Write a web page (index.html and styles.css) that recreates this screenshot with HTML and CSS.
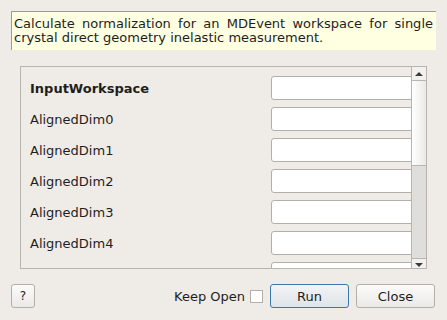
FILE: index.html
```html
<!DOCTYPE html>
<html lang="en">
<head>
  <meta charset="UTF-8" />
  <title>Algorithm Dialog</title>
  <link rel="stylesheet" href="styles.css">
</head>
<body>
  <div class="description">
    Calculate normalization for an MDEvent workspace for single crystal direct geometry inelastic measurement.
  </div>

  <div class="scroll-frame">
    <div class="properties">
      <div class="row">
        <label class="bold">InputWorkspace</label>
        <input type="text">
      </div>
      <div class="row">
        <label>AlignedDim0</label>
        <input type="text">
      </div>
      <div class="row">
        <label>AlignedDim1</label>
        <input type="text">
      </div>
      <div class="row">
        <label>AlignedDim2</label>
        <input type="text">
      </div>
      <div class="row">
        <label>AlignedDim3</label>
        <input type="text">
      </div>
      <div class="row">
        <label>AlignedDim4</label>
        <input type="text">
      </div>
      <div class="row">
        <label></label>
        <input type="text">
      </div>
    </div>
    <div class="scrollbar">
      <div class="arrow up"><span></span></div>
      <div class="handle"></div>
      <div class="track"></div>
      <div class="arrow down"><span></span></div>
    </div>
  </div>

  <div class="footer">
    <button class="btn help">?</button>
    <div class="spacer"></div>
    <span class="keep">Keep Open</span>
    <span class="checkbox"></span>
    <button class="btn run">Run</button>
    <button class="btn">Close</button>
  </div>
</body>
</html>
```

FILE: styles.css
```css
body {
  font-family: 'DejaVu Sans', sans-serif;
  font-size: 13px;
  color: #1e1e1e;
  margin: 0;
  padding: 11px 11px 0 11px;
  background-color: #efebe7;
  width: 425px;
  height: 309px;
  overflow: hidden;
}

.description {
  box-sizing: border-box;
  height: 39px;
  padding: 5px 3px 0 2px;
  background-color: #ffffe1;
  border-left: 1px solid #9c9a96;
  border-top: 1px solid #9c9a96;
  text-align: justify;
  line-height: 14px;
}

.scroll-frame {
  box-sizing: border-box;
  display: flex;
  margin: 16px 0 0 9px;
  width: 407px;
  height: 203px;
  border: 1px solid #b8b4af;
}

.properties {
  flex: 1;
  overflow: hidden;
  padding: 9px 0 0 9px;
  display: flex;
  flex-direction: column;
  gap: 7px;
}

.row {
  display: flex;
  align-items: center;
  height: 24px;
  flex-shrink: 0;
}

.row label {
  width: 241px;
  flex-shrink: 0;
  margin-top: 1px;
}

.bold {
  font-weight: bold;
}

.row input {
  box-sizing: border-box;
  width: 160px;
  height: 24px;
  flex-shrink: 0;
  border: 1px solid #b3afaa;
  border-radius: 3px;
  background: #fff;
  margin: 0;
}

.scrollbar {
  width: 14px;
  border-left: 1px solid #b8b4af;
  display: flex;
  flex-direction: column;
}

.arrow {
  height: 13px;
  display: flex;
  align-items: center;
  justify-content: center;
  background-color: #f3f1ee;
}

.arrow.up {
  border-bottom: 1px solid #b8b4af;
}

.arrow.down {
  height: 9px;
  border-top: 1px solid #b8b4af;
}

.arrow span {
  width: 0;
  height: 0;
  border-left: 4px solid transparent;
  border-right: 4px solid transparent;
}

.up span {
  border-bottom: 4px solid #3c3c3c;
}

.down span {
  border-top: 4px solid #3c3c3c;
  margin-top: 3px;
}

.handle {
  height: 84px;
  background: linear-gradient(to right, #ffffff, #ebe9e6);
  border-bottom: 1px solid #b8b4af;
}

.track {
  flex: 1;
  background-color: #e0dedb;
}

.footer {
  display: flex;
  align-items: center;
  margin-top: 15px;
  width: 424px;
}

.spacer {
  flex: 1;
}

.btn {
  font-family: 'DejaVu Sans', sans-serif;
  font-size: 13px;
  color: #1e1e1e;
  height: 24px;
  width: 79px;
  border: 1px solid #b3afaa;
  border-radius: 3px;
  background: linear-gradient(#fbfbfa, #ebe9e6);
  padding: 0;
}

.btn.help {
  width: 24px;
  font-size: 12px;
}

.btn.run {
  border-color: #3b77a8;
  background: linear-gradient(#f2f4f6, #dfe4e8);
  margin-right: 7px;
}

.keep {
  margin-right: 5px;
}

.checkbox {
  box-sizing: border-box;
  width: 13px;
  height: 13px;
  border: 1px solid #b3afaa;
  background: #fff;
  margin-right: 7px;
}
```
